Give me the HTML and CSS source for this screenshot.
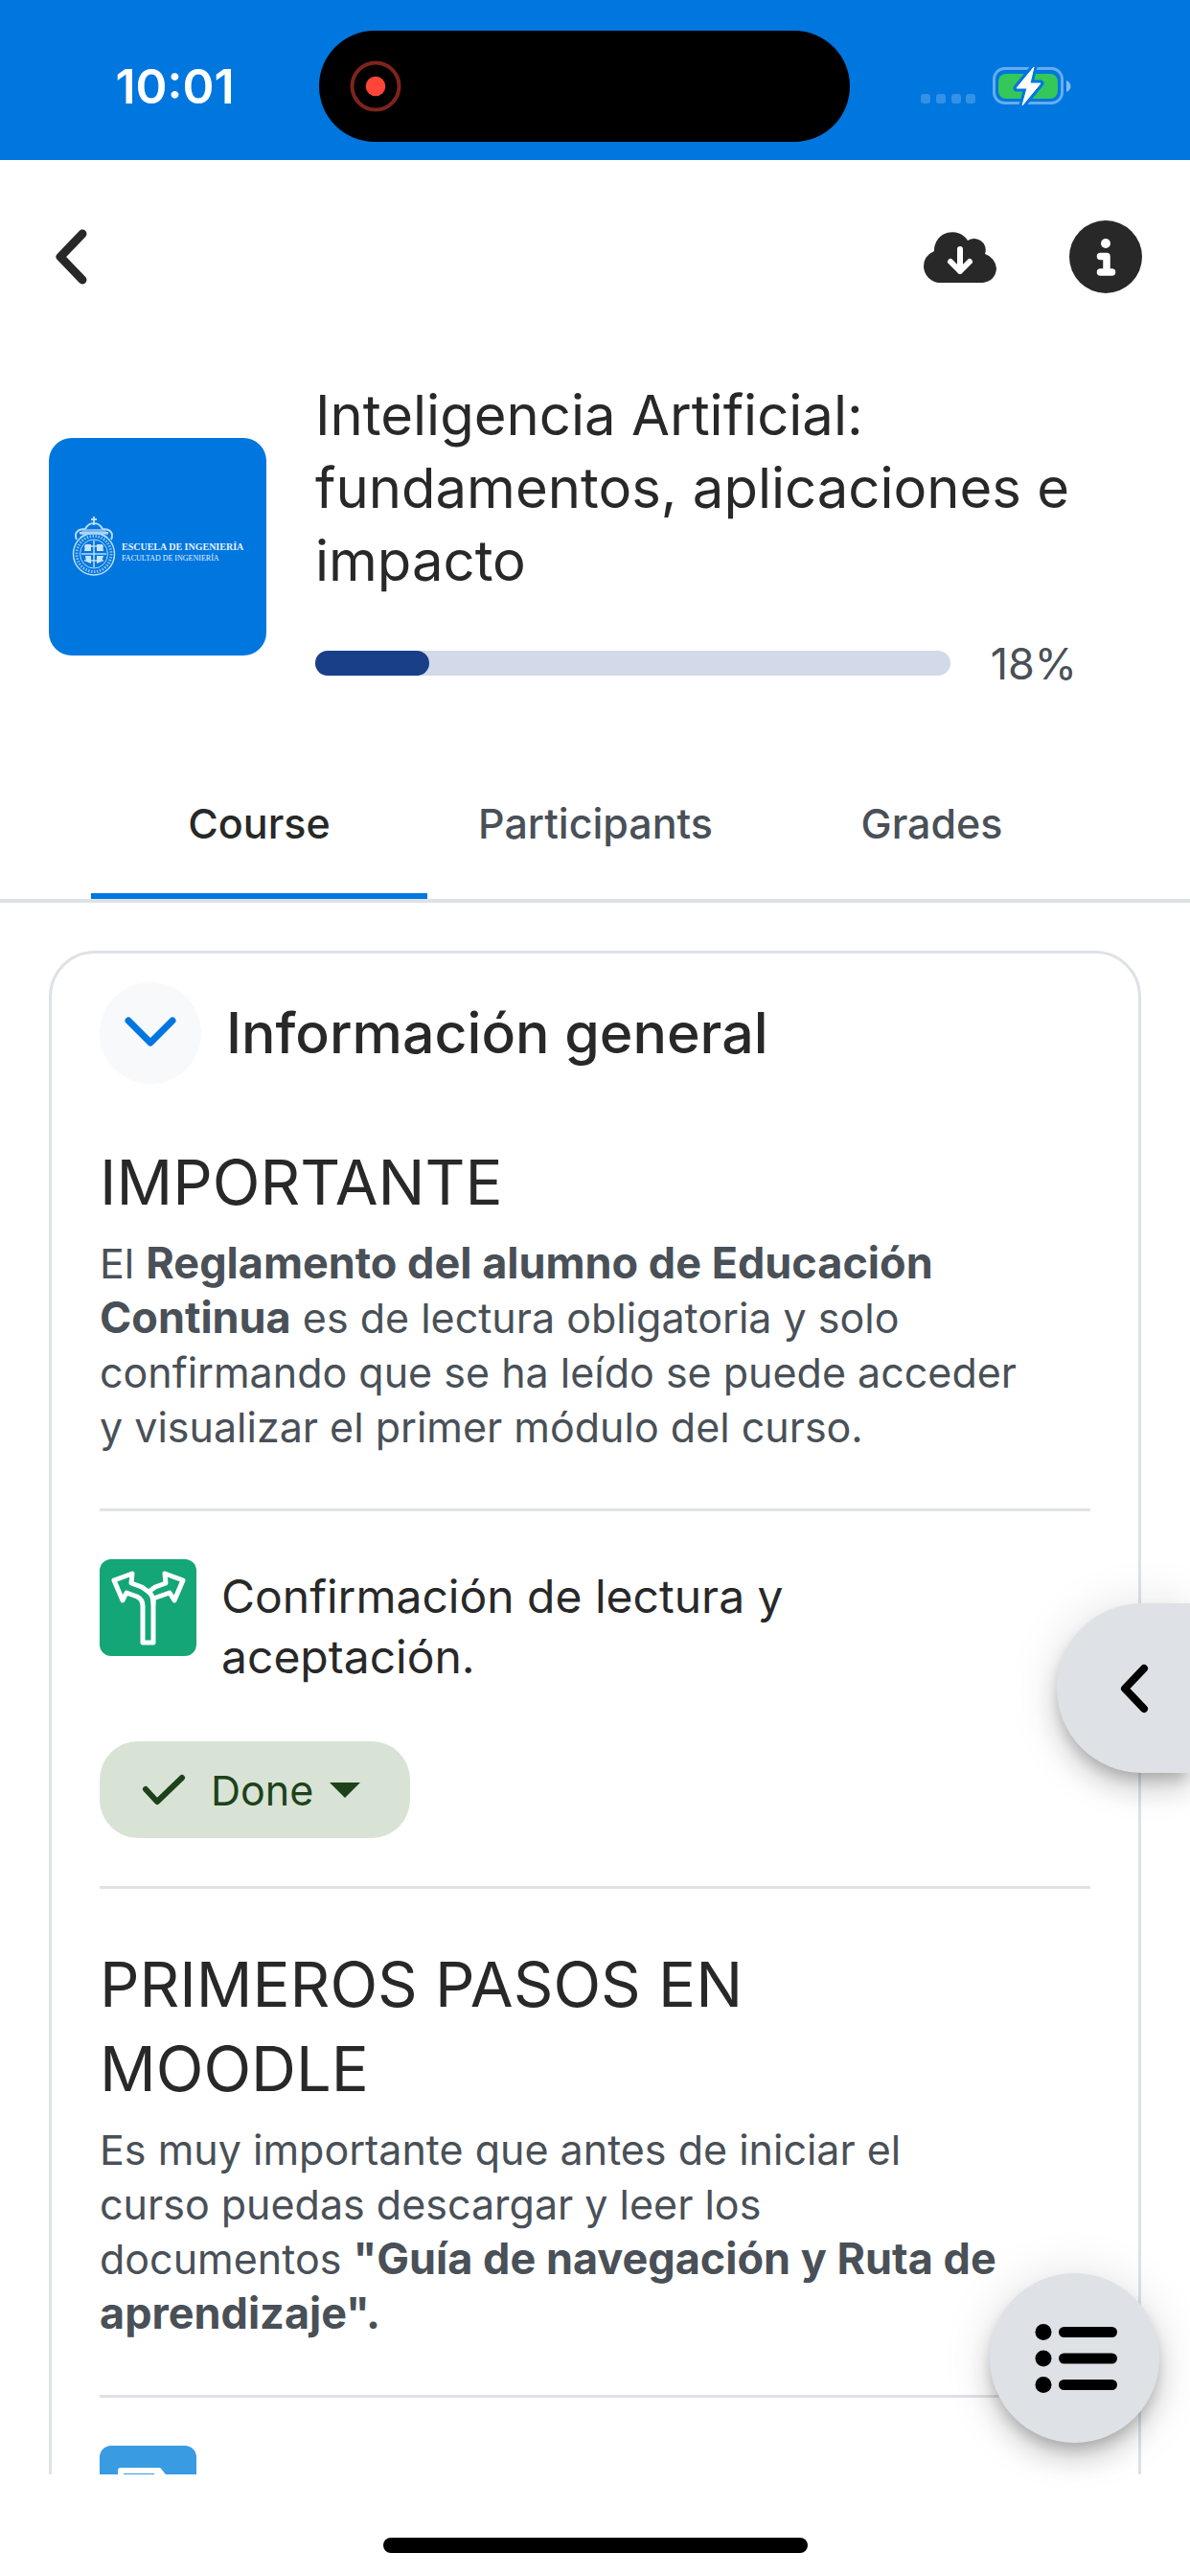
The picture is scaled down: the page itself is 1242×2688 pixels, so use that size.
FILE: index.html
```
<!DOCTYPE html>
<html lang="es">
<head>
<meta charset="utf-8">
<meta name="viewport" content="width=device-width, initial-scale=1">
<title>Inteligencia Artificial: fundamentos, aplicaciones e impacto</title>
<link rel="stylesheet" href="styles.css">
</head>
<body>
<div class="status-bar">
  <time class="clock">10:01</time>
  <div class="island">
    <svg class="recording" viewBox="0 0 54 54" aria-hidden="true"><circle cx="27" cy="27" r="24.500" fill="none" stroke="#7f231d" stroke-width="4"/><circle cx="27" cy="27" r="10.300" fill="#ff453a"/></svg>
  </div>
  <div class="indicators">
    <svg class="signal" viewBox="0 0 58 40" aria-hidden="true"><g fill="#3391e6"><rect x="0" y="28" width="10" height="10" rx="3"/><rect x="16" y="28" width="10" height="10" rx="3"/><rect x="32" y="28" width="10" height="10" rx="3"/><rect x="47" y="28" width="10" height="10" rx="3"/></g></svg>
    <svg class="battery" viewBox="0 0 84 40" aria-hidden="true">
      <rect x="1.500" y="1.500" width="71" height="36" rx="11" fill="none" stroke="#66adee" stroke-width="3"/>
      <path d="M77 14c6 2 6 10 0 12z" fill="#80bbf0"/>
      <rect x="6" y="7" width="62" height="26" rx="8" fill="#34c759"/>
      <path d="M43 0 25 22h11l-5 18 19-23H39z" fill="#fff" stroke="#0076df" stroke-width="7" stroke-linejoin="round"/>
      <path d="M43 0 25 22h11l-5 18 19-23H39z" fill="#fff" stroke="#fff" stroke-width="1" stroke-linejoin="round"/>
    </svg>
  </div>
</div>
<main class="page">
  <header class="toolbar">
    <button class="icon-button back" aria-label="Back"><svg width="42" height="64" viewBox="0 0 42 64"><path d="M34 8 11 32l23 24" fill="none" stroke="#282828" stroke-width="9" stroke-linecap="round" stroke-linejoin="round"/></svg></button>
    <div class="actions">
      <button class="icon-button" aria-label="Download course"><svg width="76" height="76" viewBox="0 0 76 76"><path d="M15 65A18 18 0 0 1 0 48Q0 37 11 32V30a19 19 0 0 1 35-9 12 12 0 0 1 18 14A17 17 0 0 1 76 50Q75 63 62 65z" fill="#282828"/><path d="M38 30v23m-10-10 10 10 10-10" fill="none" stroke="#fff" stroke-width="6" stroke-linecap="round" stroke-linejoin="round"/></svg></button>
      <button class="icon-button" aria-label="Course summary"><svg width="76" height="76" viewBox="0 0 76 76"><circle cx="38" cy="38" r="38" fill="#282828"/><circle cx="38" cy="24" r="5" fill="#fff"/><path d="M32.500 37.500H39V54m-6.500 0h12" fill="none" stroke="#fff" stroke-width="7.500" stroke-linecap="round" stroke-linejoin="round"/></svg></button>
    </div>
  </header>
  <section class="course-header">
    <div class="thumb">
      <svg class="crest" viewBox="0 0 46 62" aria-hidden="true">
        <g fill="none" stroke="#b9dbf7">
          <ellipse cx="23" cy="39" rx="21.500" ry="22" stroke-width="1.500"/>
          <ellipse cx="23" cy="39" rx="18" ry="18.500" stroke-width="3" stroke-dasharray="1.500 1.500" stroke="#8ec4f2"/>
          <ellipse cx="23" cy="39" rx="14.500" ry="15" stroke-width="1"/>
          <path d="M23 25v28M10 39h26M13 31h20M13 46h20" stroke-width="1.500"/>
          <path d="M5 24c-3-7 1-11 9-11 2-4 5-6 9-6s7 2 9 6c8 0 12 4 9 11M9 22c9-6 19-6 28 0M8 17h30M23 0v9M20 3h6" stroke-width="2"/>
        </g>
        <g fill="#c9e4fa"><path d="M14 29h6v7h-7zM26 29h6l1 7h-7zM14 41h6v8l-5-2zM26 41h7l-2 6-5 2z"/></g>
        <path d="M12 13h22l4 6H8z" fill="#a8d2f5" opacity=".7"/>
      </svg>
      <p class="school"><span class="school-name">ESCUELA DE INGENIERÍA</span><span class="faculty">FACULTAD DE INGENIERÍA</span></p>
    </div>
    <div class="course-info">
      <h1>Inteligencia Artificial: fundamentos, aplicaciones e impacto</h1>
      <div class="progress-row">
        <div class="track" role="progressbar" aria-valuenow="18" aria-valuemin="0" aria-valuemax="100" aria-label="Course progress"><div class="fill" style="width:18%"></div></div>
        <span>18%</span>
      </div>
    </div>
  </section>
  <nav class="tabs" role="tablist">
    <button role="tab" class="tab active" aria-selected="true">Course</button>
    <button role="tab" class="tab" aria-selected="false">Participants</button>
    <button role="tab" class="tab" aria-selected="false">Grades</button>
  </nav>
  <article class="card">
    <header class="card-header">
      <button class="toggle" aria-label="Collapse section"><svg width="56" height="56" viewBox="0 0 56 56"><path d="M5 15l23 23 23-23" fill="none" stroke="#0076e0" stroke-width="7" stroke-linecap="round" stroke-linejoin="round"/></svg></button>
      <h2>Información general</h2>
    </header>
    <section class="label first">
      <h3>IMPORTANTE</h3>
      <p>El <strong>Reglamento del alumno de Educación Continua</strong> es de lectura obligatoria y solo confirmando que se ha leído se puede acceder y visualizar el primer módulo del curso.</p>
    </section>
    <section class="activity">
      <div class="activity-row">
        <svg class="module-icon" viewBox="0 0 101 101" aria-hidden="true"><rect width="101" height="101" rx="12" fill="#14a676"/><path d="M45 87V49Q45 42 39 39L28 35 24 43 15 22 34 15 33 25 44 29 51 34 58 29 69 25 68 15 87 22 78 43 73 35 56 41V87z" fill="none" stroke="#fff" stroke-width="5" stroke-linejoin="round"/><path d="m51 34q5 4 5 12" fill="none" stroke="#fff" stroke-width="5" stroke-linecap="round"/></svg>
        <h4>Confirmación de lectura y aceptación.</h4>
      </div>
      <button class="done"><svg width="46" height="34" viewBox="0 0 46 34"><path d="m4 16 12 13L42 4" fill="none" stroke="#1d421a" stroke-width="6" stroke-linecap="round" stroke-linejoin="round"/></svg><span>Done</span><svg width="32" height="16" viewBox="0 0 32 16"><path d="M0 0h32L16 16z" fill="#1d421a"/></svg></button>
    </section>
    <section class="label">
      <h3>PRIMEROS PASOS EN MOODLE</h3>
      <p>Es muy importante que antes de iniciar el curso puedas descargar y leer los documentos&nbsp;<strong>"Guía de navegación y Ruta de aprendizaje".</strong></p>
    </section>
    <section class="activity">
      <svg class="module-icon" viewBox="0 0 101 101" aria-hidden="true"><rect width="101" height="101" rx="12" fill="#399be2"/><path d="M22 84V26h40l17 22v36zM60 26v22h20" fill="none" stroke="#fff" stroke-width="6" stroke-linejoin="round"/></svg>
    </section>
  </article>
</main>
<footer class="home-area"><div class="home-bar"></div></footer>
<button class="drawer" aria-label="Open blocks"><svg width="34" height="56" viewBox="0 0 34 56"><path d="M28 7 8 28l20 21" fill="none" stroke="#000" stroke-width="8" stroke-linecap="round" stroke-linejoin="round"/></svg></button>
<button class="fab" aria-label="Course index"><svg width="88" height="76" viewBox="0 0 88 76"><g fill="#000"><circle cx="11" cy="10.500" r="8.500"/><circle cx="11" cy="38" r="8.500"/><circle cx="11" cy="65.500" r="8.500"/><rect x="27" y="5" width="61" height="11" rx="5.500"/><rect x="27" y="32.500" width="61" height="11" rx="5.500"/><rect x="27" y="60" width="61" height="11" rx="5.500"/></g></svg></button>
</body>
</html>
```
FILE: styles.css
```
* { box-sizing: border-box; }
h1, h2, h3, h4, p { margin: 0; font-weight: 400; }
button { border: 0; padding: 0; background: none; font: inherit; color: inherit; }
svg { display: block; }
body {
  margin: 0;
  height: 100vh;
  display: flex;
  flex-direction: column;
  background: #fff;
  color: #282828;
  font-family: Inter, "Liberation Sans", sans-serif;
}
.status-bar {
  flex: none;
  display: grid;
  grid-template-columns: 1fr 554px 1fr;
  align-items: start;
  height: 167px;
  padding: 32px 54px 0 32px;
  background: #0076df;
}
.clock {
  justify-self: center;
  color: #fff;
  font-size: 50px;
  font-weight: 600;
  line-height: 116px;
}
.island {
  display: flex;
  align-items: center;
  height: 116px;
  padding-left: 32px;
  border-radius: 58px;
  background: #000;
}
.recording { width: 54px; }
.indicators {
  display: flex;
  align-items: center;
  justify-content: center;
  gap: 17px;
  height: 116px;
  padding-left: 6px;
}
.signal { width: 58px; }
.battery { width: 84px; }

.page { flex: 1; min-height: 0; overflow: hidden; }
.toolbar {
  display: flex;
  align-items: center;
  justify-content: space-between;
  height: 202px;
  padding: 0 50px 0 52px;
}
.actions { display: flex; gap: 76px; }
.course-header {
  display: flex;
  align-items: center;
  gap: 51px;
  padding: 26px 118px 26px 51px;
}
.thumb {
  flex: none;
  display: flex;
  align-items: center;
  width: 227px;
  height: 227px;
  margin-top: 26px;
  padding-left: 24px;
  gap: 6px;
  border-radius: 24px;
  background: #0076df;
}
.crest { flex: none; width: 46px; height: 62px; }
.school {
  display: flex;
  flex-direction: column;
  padding-top: 14px;
  color: #e6f2fd;
  font-family: "Liberation Serif", serif;
  white-space: nowrap;
}
.school-name { font-size: 10px; line-height: 12px; font-weight: 700; }
.faculty { font-size: 8px; line-height: 12px; }
.course-info { flex: 1; }
h1 { font-size: 58px; line-height: 76px; }
.progress-row {
  display: flex;
  align-items: center;
  gap: 42px;
  height: 54px;
  margin-top: 42px;
  color: #495057;
  font-size: 45px;
}
.track { flex: 1; height: 26px; border-radius: 13px; background: #d2d9e8; }
.fill { height: 100%; border-radius: 13px; background: #193f89; }

.tabs {
  display: grid;
  grid-template-columns: repeat(3, 1fr);
  padding: 42px 94px 0 95px;
  border-bottom: 4px solid #dee2e6;
}
.tab {
  height: 151px;
  padding-bottom: 2px;
  border-bottom: 6px solid transparent;
  color: #495057;
  font-size: 43px;
  font-weight: 500;
}
.tab.active { color: #282828; border-color: #0076e0; }

.card {
  margin: 50px 51px 0;
  padding: 30px 50px 50px;
  border: 3px solid #dee2e6;
  border-radius: 48px;
}
.card-header { display: flex; align-items: center; gap: 26px; }
.toggle {
  display: grid;
  place-items: center;
  width: 106px;
  height: 106px;
  border-radius: 50%;
  background: #f8f9fb;
}
h2 { font-size: 59px; line-height: 72px; font-weight: 500; }
.label { padding: 56px 72px 56px 0; border-bottom: 3px solid #dee2e6; }
.label.first { padding-top: 59px; }
h3 { font-size: 65px; line-height: 88px; }
.label p { margin-top: 12px; color: #495057; font-size: 43px; line-height: 57px; }
.label strong { font-size: 45px; line-height: 1; }
.activity { padding: 50px 0; border-bottom: 3px solid #dee2e6; }
.activity-row { display: flex; align-items: flex-start; gap: 26px; margin-bottom: 57px; }
.module-icon { flex: none; width: 101px; height: 101px; }
h4 { padding-top: 7px; max-width: 700px; font-size: 48px; line-height: 63px; }
.done {
  display: flex;
  align-items: center;
  width: 324px;
  height: 101px;
  padding-left: 44px;
  border-radius: 40px;
  background: #d8e3d6;
  color: #1d421a;
  font-size: 43px;
}
.done span { margin: 0 17px 0 26px; }

.home-area { flex: none; height: 106px; padding-top: 66px; }
.home-bar { width: 443px; height: 16px; margin: 0 auto; border-radius: 8px; background: #000; }

.drawer, .fab {
  position: fixed;
  display: flex;
  align-items: center;
  height: 177px;
  background: #dee2e6;
  box-shadow: 0 9px 15px -3px rgba(0, 0, 0, .2), 0 18px 30px rgba(0, 0, 0, .14), 0 3px 54px rgba(0, 0, 0, .12);
}
.drawer { right: 0; bottom: 838px; width: 139px; padding-left: 63px; border-radius: 89px 0 0 89px; }
.fab { right: 32px; bottom: 139px; width: 177px; justify-content: center; border-radius: 50%; }
```
